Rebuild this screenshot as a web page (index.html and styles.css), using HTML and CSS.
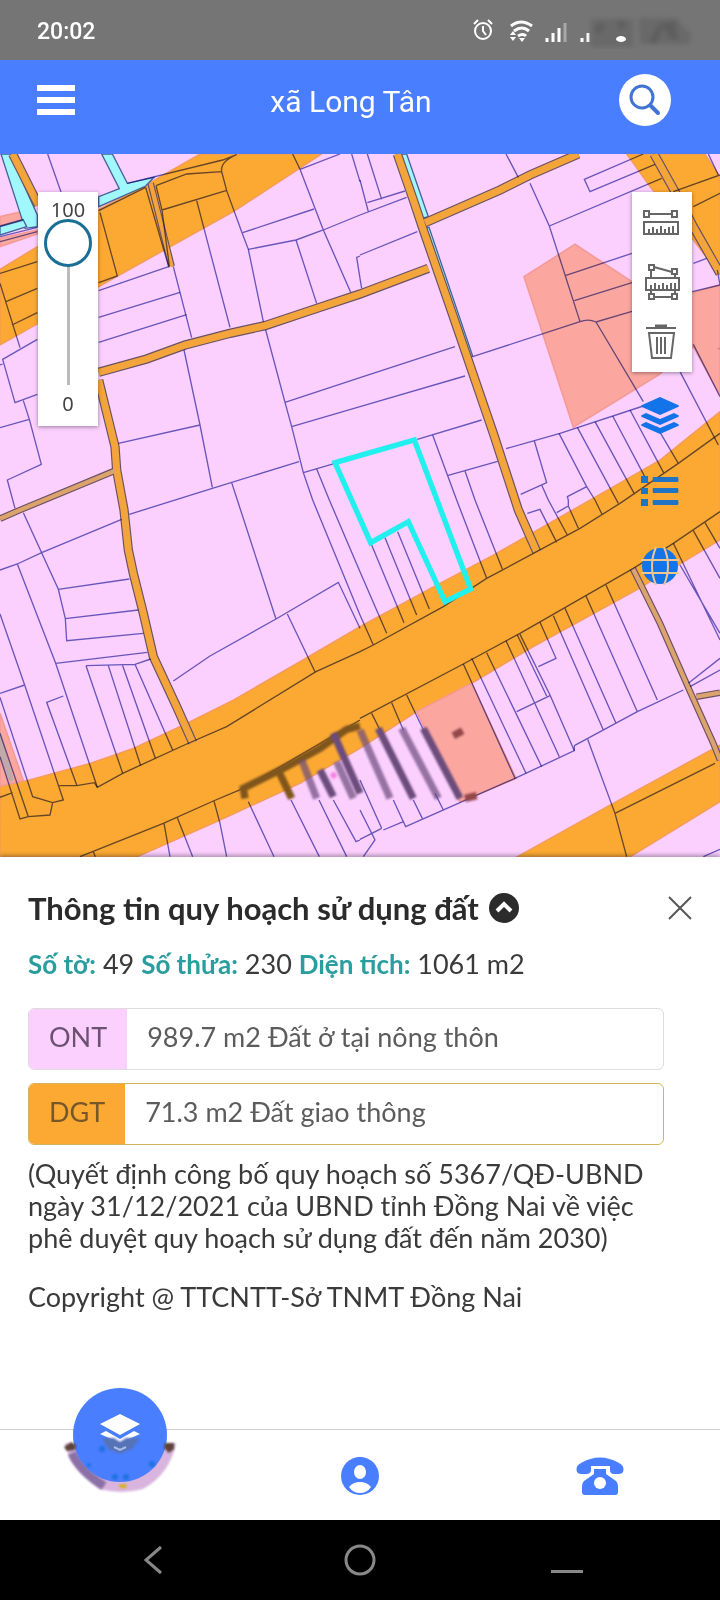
FILE: index.html
```html
<!DOCTYPE html>
<html lang="vi">
<head>
  <meta charset="utf-8">
  <title>xã Long Tân</title>
  <meta name="viewport" content="width=device-width, initial-scale=1">
  <link rel="stylesheet" href="styles.css">
</head>
<body>

  <div class="status">
    <span class="clock">20:02</span>
    <svg class="status-icons" width="226" height="34" viewBox="0 0 226 34" fill="none" stroke="#fff" stroke-width="2">
      <g transform="translate(0 1)">
        <circle cx="10" cy="15" r="8"/>
        <path d="M10 10v5l3 4M1 8l4-4M19 8l-4-4"/>
      </g>
      <g stroke-width="3">
        <path d="M38 11q10-8 21 0M41 16q8-6 15 0M45 21q5-3 8 0"/>
      </g>
      <path fill="#fff" stroke="none" d="M37 20l3-4 3 4zM37 22h6l-3 4zM46 23h6l-3 4z"/>
      <path stroke-width="3" d="M74 27v-4M80 27v-9M86 27V13"/>
      <path stroke-width="3" stroke="#a8a8a8" d="M92 27V8"/>
      <path stroke-width="3" d="M109 27v-4M115 27v-9"/>
      <g stroke="none" class="smudge">
        <path fill="#696969" d="M118 4h42v28h-42V12zM166 3h38l7 10 7 6-2 10h-49z"/>
        <path fill="#5e5e5e" d="M120 14l8-6 5 3-7 8zM143 5l11 3-6 8zM175 27l11-18 16-3 3 20-9-4-6-10-7 17z"/>
      </g>
      <ellipse cx="148" cy="24" rx="5" ry="3" fill="#fff" stroke="none"/>
    </svg>
  </div>

  <header class="header">
    <button class="icon-btn menu" aria-label="Menu">
      <svg width="38" height="30" viewBox="0 0 38 30" fill="#fff"><path d="M0 0h38v6H0zM0 12h38v6H0zM0 24h38v6H0z"/></svg>
    </button>
    <h1>xã Long Tân</h1>
    <button class="icon-btn search" aria-label="Search">
      <svg width="34" height="34" viewBox="0 0 34 34" fill="none" stroke="#4174d2" stroke-width="3"><circle cx="14" cy="14" r="11"/><path stroke-width="4" stroke-linecap="round" d="M23 23l7 7"/></svg>
    </button>
  </header>

  <main class="map">
    <svg class="map-canvas" viewBox="0 12 2160 2109">
      <!-- land use zones -->
      <g class="zone-dgt">
        <path d="M0 358L296 178 437 105 600 12H965L700 185 296 410 112 522 0 585z"/>
        <path d="M1880 12H2115L2160 80V375L2080 270 1950 110z"/>
        <path d="M0 1908L80 1892 270 1840 400 1795 560 1720 700 1650 900 1535 1080 1430 1310 1305 1480 1215 1770 1050 1980 930 2160 785V1170L1910 1320 1600 1490 1415 1600 1250 1685 1080 1795 900 1900 650 2015 410 2121H0z"/>
        <path d="M1550 2121L1830 1965 2160 1785V1955L1890 2121z"/>
      </g>
      <g class="zone-red">
        <path d="M1572 380L1725 283 1896 395 2080 428 2160 405V735L2080 590 1975 675 1720 832z"/>
        <path d="M1250 1685L1415 1600 1548 1885 1380 1955z"/>
        <path d="M0 1690L70 1892 0 1908zM0 200L65 185 80 212 0 228zM0 265L112 240V252L0 290z"/>
      </g>
      <path fill="#c0a9a9" d="M0 1745L42 1890 28 1895 0 1820z"/>
      <path fill="#d98c85" d="M2150 598L2160 590V600z"/>
      <g class="water">
        <path d="M3 12H30L112 195V230L75 235z"/>
        <path d="M305 12H337L382 100 462 82 437 108 296 170V140L358 116z"/>
        <path d="M0 230L70 210 80 230 0 255z"/>
        <path d="M1200 12H1220L1285 200 1262 206zM1275 235L1287 232 1418 618 1405 622z"/>
      </g>

      <!-- village roads: dark casing, then the fill -->
      <g class="road-case">
        <path d="M38 12L115 165"/>
        <path d="M296 667L440 627 555 585 690 550 795 527 930 482 1080 432 1285 355"/>
        <path d="M296 690L345 890 350 960 372 1080 385 1200 400 1270 430 1390 460 1520 530 1670 578 1778"/>
        <path class="narrow" d="M345 962L60 1080 0 1106"/>
        <path d="M1192 12L1240 150 1270 240 1360 500 1480 850 1555 1080 1610 1205"/>
        <path d="M1275 218L1500 120 1590 75 1735 12"/>
        <path d="M1962 12L2025 125 2080 230 2160 370"/>
        <path class="narrow" d="M1898 1255L1980 1420 2068 1620 2140 1780 2160 1830M2090 1640L2160 1628"/>
        <path class="narrow" d="M452 100L515 350"/>
      </g>
      <g class="road-fill">
        <path d="M38 12L115 165"/>
        <path d="M296 667L440 627 555 585 690 550 795 527 930 482 1080 432 1285 355"/>
        <path d="M296 690L345 890 350 960 372 1080 385 1200 400 1270 430 1390 460 1520 530 1670 578 1778"/>
        <path class="narrow dim" d="M345 962L60 1080 0 1106"/>
        <path d="M1192 12L1240 150 1270 240 1360 500 1480 850 1555 1080 1610 1205"/>
        <path d="M1275 218L1500 120 1590 75 1735 12"/>
        <path d="M1962 12L2025 125 2080 230 2160 370"/>
        <path class="narrow dim" d="M1898 1255L1980 1420 2068 1620 2140 1780 2160 1830M2090 1640L2160 1628"/>
        <path class="narrow" d="M452 100L515 350"/>
      </g>

      <!-- parcel borders, one group per tile -->
      <g class="parcels">
        <g>
          <path d="M143 12L183 126M296 182L437 112M437 112L506 350 296 422M300 188L352 378 296 398M468 107L560 72 665 65M520 350L575 563M468 107L486 180 508 348M486 180L678 122M590 152L690 532M382 100L668 30 710 14Q660 35 665 65L680 122 725 245 745 298 790 515"/>
          <path d="M878 12L900 58 970 240 1052 427M900 58L1020 12M1055 12L1080 95M728 248L942 177M745 298L888 270 970 240 1080 195M888 270L950 460M1080 318L1070 322 1080 385M296 502L540 427M296 577L560 494"/>
          <path d="M552 600L600 825 637 1012M797 540L855 757 875 830 910 968 938 1050M855 757L1080 683M875 830L1080 770M910 968L1005 940M950 957L988 1050M355 880L600 825M388 1093L637 1015 897 935M695 998L712 1050"/>
          <path d="M0 370L112 335M18 455L112 415M36 525L112 488M0 400L60 593M112 568L8 628 45 758 112 733M8 642L0 645M70 752L88 808 124 943 22 990 45 1075M88 808L0 833M0 228L70 208M0 260L112 232M0 275L112 245"/>
        </g>
        <g transform="translate(1080 0)">
          <path d="M22 12L65 148M0 90L25 185M0 195L140 142M22 158L135 123M0 315L172 245M0 385L5 415M438 12L475 82M510 100L568 228 660 515M568 228L905 85M850 12L673 88 690 125 885 43M618 376L816 310M643 452L816 398M338 620L660 515Q685 505 708 516L816 484M708 516L850 755"/>
          <path d="M960 665L1075 885M1000 583L1080 740M1000 340L1040 325M997 425L1080 405 1072 360M940 125L1080 75M1000 170L1080 130M1045 12L1075 75M0 683L285 590M0 770L315 678M172 868L365 810M217 853L290 1050M262 977L413 934M315 963L345 1050M438 896L600 850 850 768"/>
          <path d="M523 873L560 998 482 1033M545 1005L565 1050M597 850L680 1010 622 1040 625 1050M680 1010L705 1050M652 832L775 1060M705 815L824 1033M758 798L865 1000M810 780L912 970M890 830L955 940M780 1060L955 940 1080 850"/>
        </g>
        <g transform="translate(0 1050)">
          <path d="M70 38L175 268 196 356 200 422 430 400M0 210L52 192 125 158 365 58M52 192L167 490 292 862M175 268L388 237M196 356L415 330M167 490L442 457M258 497L405 493 452 477M258 497L368 820M325 497L422 797M367 494L466 775M405 493L518 750"/>
          <path d="M0 342L74 555 190 900 158 908 98 890 0 592M0 580L74 555M190 588L140 607 230 855M178 857H230L283 848 292 862 368 820 560 732 680 680 948 515 1080 455M158 908L150 945 85 950 60 957 0 770M85 950L0 700M0 892L38 878"/>
          <path d="M712 0L828 357M520 543L630 468 828 357 1015 247 1080 385M862 342L945 515M938 0L1080 345M988 0L1080 215M240 1070L490 970 640 903 730 865 1080 660M280 1055L286 1070M492 970L510 1070M532 953L578 1070M642 903L660 970 680 1070M745 905L822 1070M873 900L958 1070M957 900L1040 1070M1000 900L1068 1025 1080 1020"/>
        </g>
        <g transform="translate(1080 1050)">
          <path d="M0 455L40 435 250 320 380 235 530 155 660 85 780 10M0 655L310 492 480 400 820 205 940 130 1080 35M0 215L80 400M0 345L40 435M35 135L132 368M75 113L170 345M113 95L208 327M290 0L380 235M345 0L427 207M502 40L540 28 590 127M565 0L622 105M590 38L625 18 655 85M625 0V18M705 0L727 45"/>
          <path d="M310 492L465 835M335 475L498 820M380 458L545 800M438 422L598 770M480 403L570 585 643 752M472 405L560 588M470 635L570 587M540 367L588 475 535 500M580 347L730 690M615 325L768 670M678 288L832 635M738 255L892 600M940 130L1080 420M960 195L1080 400M1000 92L1080 235M1035 68L1080 145M643 737L832 635 970 570"/>
          <path d="M0 1018L65 985M70 990L130 965 137 980 465 835 643 752V737M990 560L1080 510M985 550L1080 475M683 718L765 940 800 1070M765 940L1065 790M1030 1070L1080 1048M0 840L65 985M0 930L45 1020 10 1070M130 965L100 900M187 955L160 900M250 930L225 880M35 640L60 690M95 608L130 690M140 585L195 700"/>
        </g>
      </g>

      <g class="smear">
        <path class="brown" d="M735 1945L730 1915 860 1850 960 1795 1040 1738 1080 1728M840 1872L875 1945"/>
        <path class="faint" d="M905 1830L950 1945M1010 1835L1060 1945M1080 1740L1170 1945M1205 1735L1315 1945"/>
        <path d="M960 1860L1000 1940M1000 1750L1080 1930M1135 1735L1240 1945M1270 1735L1380 1945"/>
        <path class="maroon" d="M1360 1757L1388 1742M1395 1945L1430 1937"/>
        <path class="pink" d="M994 1880L1008 1872"/>
      </g>

      <path class="selected" d="M1005 938L1243 870 1412 1317 1335 1355 1225 1115 1112 1178z"/>
    </svg>

    <div class="opacity-box">
      <label for="opacity">100</label>
      <input id="opacity" type="range" min="0" max="100" value="100">
      <span>0</span>
    </div>

    <div class="side-tools">
      <div class="measure-box">
        <button class="icon-btn" aria-label="Measure distance">
          <svg width="38" height="38" viewBox="0 0 38 38" fill="none" stroke="#666" stroke-width="2"><path d="M2 18h34v12H2zM7 29v-4M11 29v-6M15 29v-4M19 29v-7M23 29v-4M27 29v-6M31 29v-7M7 10h22M2 7h5v6H2zM30 7h5v6h-5z"/></svg>
        </button>
        <button class="icon-btn" aria-label="Measure area">
          <svg width="38" height="38" viewBox="0 0 38 38" fill="none" stroke="#666" stroke-width="2"><path d="M4 15h33v12H4zM9 26v-4M13 26v-6M17 26v-4M21 26v-6M25 26v-4M29 26v-6M33 26v-6M7 2h5v5H7zM30 6h5v5h-5zM12 4l18 5M9 7v8M33 11v4M7 31h5v5H7zM30 31h5v5h-5zM12 34h18M9 27v4M33 27v4"/></svg>
        </button>
        <button class="icon-btn" aria-label="Delete">
          <svg width="38" height="38" viewBox="0 0 38 38" fill="none" stroke="#666" stroke-width="2"><path d="M4 6h30M7 11h25l-3 25H10zM15 15v17M19 15v17M23 15v17"/><path stroke-width="3" d="M13 4h12"/></svg>
        </button>
      </div>
      <button class="icon-btn" aria-label="Layers">
        <svg width="38" height="38" viewBox="0 0 38 38" fill="#1274e8"><path d="M19 0l18 8q2 1 0 2l-18 8L1 10Q-1 9 1 8zM5 16l14 6 14-6 4 2q2 1 0 2l-18 8-18-8q-2-1 0-2zM5 25l14 6 14-6 4 2q2 1 0 2l-18 8-18-8q-2-1 0-2z"/></svg>
      </button>
      <button class="icon-btn" aria-label="Legend">
        <svg width="38" height="30" viewBox="0 0 38 30" fill="#2273c4"><path d="M0 0h7v7H0zM0 12h7v6H0zM0 23h7v7H0zM12 1h25q1 3 0 5H12q-1-3 0-5zM12 12h25q1 3 0 5H12q-1-3 0-5zM12 24h25q1 3 0 5H12q-1-3 0-5z"/></svg>
      </button>
      <button class="icon-btn" aria-label="Base map">
        <svg width="38" height="38" viewBox="0 0 38 38"><circle cx="19" cy="19" r="18" fill="#1274e8"/><path d="M0 13h38M0 26h38M15 0Q7 19 15 38M23 0q8 19 0 38" fill="none" stroke="#efc58f" stroke-width="2"/></svg>
      </button>
    </div>
  </main>

  <section class="info">
    <div class="info-head">
      <h2>Thông tin quy hoạch sử dụng đất</h2>
      <button class="icon-btn" aria-label="Collapse">
        <svg width="30" height="30" viewBox="0 0 30 30"><circle cx="15" cy="15" r="15" fill="#2b2b2b"/><path d="M8 18l7-7 7 7" fill="none" stroke="#fff" stroke-width="4"/></svg>
      </button>
      <button class="icon-btn close" aria-label="Close">
        <svg width="24" height="24" viewBox="0 0 24 24" stroke="#555" stroke-width="2"><path d="M1 1l22 22M23 1L1 23"/></svg>
      </button>
    </div>
    <p class="parcel"><b>Số tờ:</b> 49 <b>Số thửa:</b> 230 <b>Diện tích:</b> 1061 m2</p>
    <div class="use ont">
      <span class="code">ONT</span>
      <span class="area">989.7 m2 Đất ở tại nông thôn</span>
    </div>
    <div class="use dgt">
      <span class="code">DGT</span>
      <span class="area">71.3 m2 Đất giao thông</span>
    </div>
    <p class="note">(Quyết định công bố quy hoạch số 5367/QĐ-UBND ngày 31/12/2021 của UBND tỉnh Đồng Nai về việc phê duyệt quy hoạch sử dụng đất đến năm 2030)</p>
    <p class="copyright">Copyright @ TTCNTT-Sở TNMT Đồng Nai</p>
  </section>

  <nav class="tabs">
    <a href="#map" class="tab-map" aria-label="Map">
      <svg width="116" height="108" viewBox="0 0 116 108">
        <path class="soft" d="M3 56q4 24 35 46 20 6 43 0 27-15 33-46l-12 3H14z" fill="#d9b4df"/>
        <path class="soft" d="M10 66q8 18 32 33" fill="none" stroke="#8a70a5" stroke-width="9"/>
        <circle cx="58" cy="48" r="47" fill="#487eff"/>
        <path class="soft" d="M2 60l7-5 5 3-1 5-8 1zM103 56h9v6l-5 4-5-5z" fill="#5c4338"/>
        <path d="M58 27l20 10-20 11-20-11zM38 47l6-3 14 8 14-8 6 3-20 9z" fill="#fff"/>
        <path class="soft" d="M40 51h12l6 4 6-4h14l-8 11-12 5-12-5z" fill="#5673b8"/>
        <path d="M52 60l6 3 6-3" fill="none" stroke="#a9bde8" stroke-width="2"/>
        <g class="soft" fill="#1f72e0"><circle cx="27" cy="78" r="2"/><circle cx="90" cy="77" r="3"/><circle cx="53" cy="90" r="3"/><circle cx="64" cy="90" r="3"/><circle cx="40" cy="62" r="3"/></g>
        <ellipse class="soft" cx="61" cy="99" rx="4" ry="2" fill="#d6b020"/>
      </svg>
    </a>
    <a href="#account" class="tab-account" aria-label="Account">
      <svg width="38" height="38" viewBox="0 0 38 38"><circle cx="19" cy="19" r="19" fill="#487eff"/><ellipse cx="19" cy="15" rx="6" ry="7" fill="#fff"/><path d="M8 30q4-5 11-5t11 5q-4 6-11 6T8 30z" fill="#fff"/></svg>
    </a>
    <a href="#phone" class="tab-phone" aria-label="Phone">
      <svg width="48" height="38" viewBox="0 0 48 38"><path d="M1 15Q-1 9 5 6q19-11 38 0 6 3 4 9-1 2-4 2h-5q-4 0-4-4V9H15v4q0 4-5 4H5q-3 0-4-2z" fill="#487eff"/><path d="M18 12h12v5l10 7q2 2 2 5v6q0 3-3 3H9q-3 0-3-3v-6q0-3 2-5l10-7z" fill="#487eff"/><circle cx="24" cy="26" r="6" fill="#fff"/></svg>
    </a>
  </nav>

  <div class="sysnav">
    <button class="icon-btn" aria-label="Back"><svg width="20" height="30" viewBox="0 0 20 30" fill="none" stroke="#888" stroke-width="3"><path d="M18 2L3 15l15 13"/></svg></button>
    <button class="icon-btn" aria-label="Home"><svg width="34" height="34" viewBox="0 0 34 34" fill="none" stroke="#888" stroke-width="3"><circle cx="17" cy="17" r="14"/></svg></button>
    <button class="icon-btn" aria-label="Recent"><svg width="34" height="34" viewBox="0 0 34 34"><path d="M1 27h32v3H1z" fill="#888"/></svg></button>
  </div>

</body>
</html>
```

FILE: styles.css
```css
* {
  box-sizing: border-box;
}

body {
  margin: 0;
  min-height: 100vh;
  display: flex;
  flex-direction: column;
  background: #fff;
  color: #3a3a3a;
  font-family: Lato, "Noto Sans", sans-serif;
  font-size: 27px;
  line-height: 32px;
}

h1, h2, p {
  margin: 0;
}

svg {
  display: block;
}

.icon-btn {
  display: flex;
  align-items: center;
  justify-content: center;
  padding: 0;
  border: 0;
  background: none;
}

/* top bars */
.status {
  display: flex;
  align-items: center;
  justify-content: space-between;
  height: 60px;
  padding: 4px 21px 0 37px;
  background: #757575;
  color: #fff;
}

.clock {
  font-family: Roboto, sans-serif;
  font-size: 23px;
  font-weight: 500;
}

.smudge {
  filter: blur(2px);
}

.header {
  display: grid;
  grid-template-columns: 46px 1fr 52px;
  align-items: center;
  height: 94px;
  padding: 0 49px 14px 37px;
  background: #487eff;
}

.menu {
  justify-content: flex-start;
}

.header h1 {
  padding-top: 4px;
  color: #fff;
  font-family: Roboto, sans-serif;
  font-size: 30px;
  font-weight: 400;
  text-align: center;
}

.search {
  width: 52px;
  height: 52px;
  border-radius: 50%;
  background: #fff;
}

/* map */
.map {
  position: relative;
  overflow: hidden;
  background: #fbcffe;
}

.map-canvas {
  width: 100%;
  height: auto;
}

.zone-dgt path {
  fill: #fba932;
  stroke: #f59a5c;
  stroke-width: 4;
}

.zone-red path {
  fill: #fba7a0;
  stroke: #f49a98;
  stroke-width: 5;
}

.water path {
  fill: #a0f8fc;
  stroke: #46629c;
  stroke-width: 4;
}

.road-case path {
  fill: none;
  stroke: #6a5265;
  stroke-width: 28;
}

.road-fill path {
  fill: none;
  stroke: #f3a43a;
  stroke-width: 21;
}

.road-case .narrow {
  stroke-width: 20;
}

.road-fill .narrow {
  stroke-width: 13;
}

.road-fill .dim {
  stroke: #dca36c;
}

.parcels path {
  fill: none;
  stroke: #6a6abc;
  stroke-width: 4;
  mix-blend-mode: multiply;
}

.smear path {
  fill: none;
  stroke: #6c4c7c;
  stroke-width: 22;
  filter: blur(3px);
}

.smear .brown {
  stroke: #80551c;
}

.smear .maroon {
  stroke: #93474a;
}

.smear .pink {
  stroke: #f77be0;
  stroke-width: 16;
}

.smear .faint {
  opacity: 0.7;
}

.selected {
  fill: none;
  stroke: #22f0ee;
  stroke-width: 16;
}

.opacity-box {
  position: absolute;
  top: 38px;
  left: 38px;
  display: flex;
  flex-direction: column;
  align-items: center;
  width: 60px;
  padding: 6px 0 10px;
  background: #fff;
  box-shadow: 0 1px 4px rgba(0, 0, 0, 0.4);
  color: #444;
  font-family: "Noto Sans", sans-serif;
  font-size: 20px;
  line-height: 24px;
}

.opacity-box input {
  appearance: none;
  writing-mode: vertical-lr;
  direction: rtl;
  width: 48px;
  height: 166px;
  margin: -3px 0 7px;
  background: none;
}

.opacity-box input::-webkit-slider-runnable-track {
  width: 48px;
  height: 100%;
  background: linear-gradient(#bbb, #bbb) center / 3px 100% no-repeat;
}

.opacity-box input::-webkit-slider-thumb {
  appearance: none;
  width: 48px;
  height: 48px;
  border: 3px solid #1b6f96;
  border-radius: 50%;
  background: #fff;
}

.side-tools {
  position: absolute;
  top: 38px;
  right: 28px;
  display: flex;
  flex-direction: column;
  align-items: center;
  gap: 41px;
  width: 60px;
  padding-right: 4px;
}

.measure-box {
  display: flex;
  flex-direction: column;
  align-items: center;
  gap: 21px;
  width: 60px;
  height: 180px;
  margin: 0 -4px -16px 0;
  padding: 12px 2px 0 0;
  background: #fff;
  box-shadow: 0 1px 4px rgba(0, 0, 0, 0.4);
}

/* parcel information */
.info {
  flex: 1;
  position: relative;
  padding: 35px 28px 24px;
  background: #fff;
  box-shadow: 0 -2px 4px rgba(0, 0, 0, 0.3);
}

.info-head {
  display: flex;
  align-items: center;
  gap: 10px;
}

.info-head h2 {
  color: #2b2b2b;
  font-size: 31px;
  font-weight: 700;
}

.info-head .close {
  margin-left: auto;
}

.parcel {
  margin: 24px 0 28px;
}

.parcel b {
  color: #2a9d9f;
  font-size: 26px;
}

.use {
  display: flex;
  height: 62px;
  margin: 0 28px 13px 0;
  border: 1px solid #ddd;
  border-radius: 6px;
  overflow: hidden;
  color: #5c5c5c;
}

.use span {
  display: flex;
  align-items: center;
  padding: 0 20px 4px;
}

.ont .code {
  background: #fbcffe;
  color: #6b5270;
}

.use.dgt {
  border-color: #d3b45c;
}

.dgt .code {
  background: #fba932;
  color: #75572a;
}

.note {
  max-width: 640px;
}

.copyright {
  margin-top: 27px;
}

/* bottom bars */
.tabs {
  position: relative;
  display: grid;
  grid-template-columns: repeat(3, 1fr);
  align-items: center;
  justify-items: center;
  height: 91px;
  padding-top: 2px;
  border-top: 1px solid #ccc;
  background: #fff;
}

.tab-map {
  position: absolute;
  top: -43px;
  left: 62px;
}

.tab-account {
  grid-column: 2;
}

.tab-phone {
  grid-column: 3;
}

.soft {
  filter: blur(1px);
}

.sysnav {
  display: grid;
  grid-template-columns: repeat(3, 1fr);
  align-items: center;
  height: 80px;
  padding: 0 50px;
  background: #000;
}
```
